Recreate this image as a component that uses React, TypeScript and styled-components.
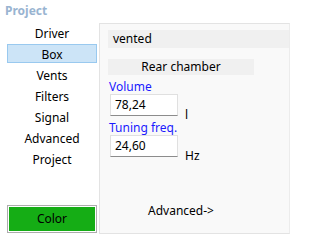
import React from "react";
import styled, { createGlobalStyle } from "styled-components";

const GlobalStyle = createGlobalStyle`
  html, body {
    margin: 0;
    padding: 0;
    background: #ffffff;
  }
  body {
    font-family: "Noto Sans", "Liberation Sans", sans-serif;
    font-size: 12px;
    color: #000000;
  }
`;

const Window = styled.div`
  width: 290px;
  height: 234px;
  display: flex;
  flex-direction: column;
  overflow: hidden;
  background: #ffffff;
`;

const Title = styled.div`
  height: 23px;
  padding-left: 5px;
  font-weight: bold;
  font-size: 12px;
  line-height: 21px;
  color: #99b4d1;
`;

const Body = styled.div`
  flex: 1;
  display: flex;
  min-height: 0;
`;

const Sidebar = styled.div`
  width: 99px;
  display: flex;
  flex-direction: column;
  padding: 0 2px 1px 7px;
  box-sizing: border-box;
`;

const NavList = styled.div`
  display: flex;
  flex-direction: column;
  margin-top: -1px;
`;

const NavItem = styled.div<{ $active?: boolean }>`
  height: 19px;
  margin: 1px 0;
  line-height: 19px;
  text-align: center;
  box-sizing: border-box;
  border: 1px solid ${(p) => (p.$active ? "#99c9ef" : "transparent")};
  background: ${(p) => (p.$active ? "#cce4f7" : "transparent")};
`;

const ColorButton = styled.div`
  margin-top: auto;
  height: 28px;
  box-sizing: border-box;
  border: 1px solid #adadad;
  padding: 1px;
  background: #ffffff;
  display: flex;
`;

const ColorFill = styled.div`
  flex: 1;
  background: #15ad15;
  display: flex;
  align-items: center;
  justify-content: center;
  line-height: 1;
`;

const Panel = styled.div`
  flex: 1;
  box-sizing: border-box;
  border: 1px solid #e3e3e3;
  border-right-color: #ececec;
  background: #f9f9f9;
  padding: 6px 0 0 8px;
  display: flex;
  flex-direction: column;
`;

const TypeBar = styled.div`
  height: 18px;
  background: #f0f0f0;
  padding-left: 5px;
  line-height: 18px;
`;

const SectionBar = styled.div`
  margin-top: 11px;
  width: 146px;
  height: 16px;
  background: #f0f0f0;
  text-align: center;
  line-height: 16px;
`;

const FieldLabel = styled.div<{ $first?: boolean }>`
  margin-top: ${(p) => (p.$first ? "4px" : "4px")};
  padding-left: 1px;
  height: 15px;
  line-height: 15px;
  color: #1a1aff;
`;

const FieldRow = styled.div`
  display: flex;
  align-items: flex-end;
  gap: 7px;
  padding-left: 2px;
`;

const Input = styled.div`
  width: 68px;
  height: 22px;
  box-sizing: border-box;
  background: #ffffff;
  border: 1px solid #e0e0e0;
  border-bottom-color: #8c8c8c;
  padding-left: 4px;
  line-height: 19px;
`;

const Unit = styled.div`
  line-height: 12px;
  margin-bottom: -5px;
`;

const AdvancedLink = styled.div`
  margin-top: 47px;
  padding-left: 40px;
  line-height: 14px;
`;

const navItems = ["Driver", "Box", "Vents", "Filters", "Signal", "Advanced", "Project"];

export default function App() {
  return (
    <Window>
      <GlobalStyle />
      <Title>Project</Title>
      <Body>
        <Sidebar>
          <NavList>
            {navItems.map((item) => (
              <NavItem key={item} $active={item === "Box"}>
                {item}
              </NavItem>
            ))}
          </NavList>
          <ColorButton>
            <ColorFill>Color</ColorFill>
          </ColorButton>
        </Sidebar>
        <Panel>
          <TypeBar>vented</TypeBar>
          <SectionBar>Rear chamber</SectionBar>
          <FieldLabel $first>Volume</FieldLabel>
          <FieldRow>
            <Input>78,24</Input>
            <Unit>l</Unit>
          </FieldRow>
          <FieldLabel>Tuning freq.</FieldLabel>
          <FieldRow>
            <Input>24,60</Input>
            <Unit>Hz</Unit>
          </FieldRow>
          <AdvancedLink>Advanced-&gt;</AdvancedLink>
        </Panel>
      </Body>
    </Window>
  );
}
